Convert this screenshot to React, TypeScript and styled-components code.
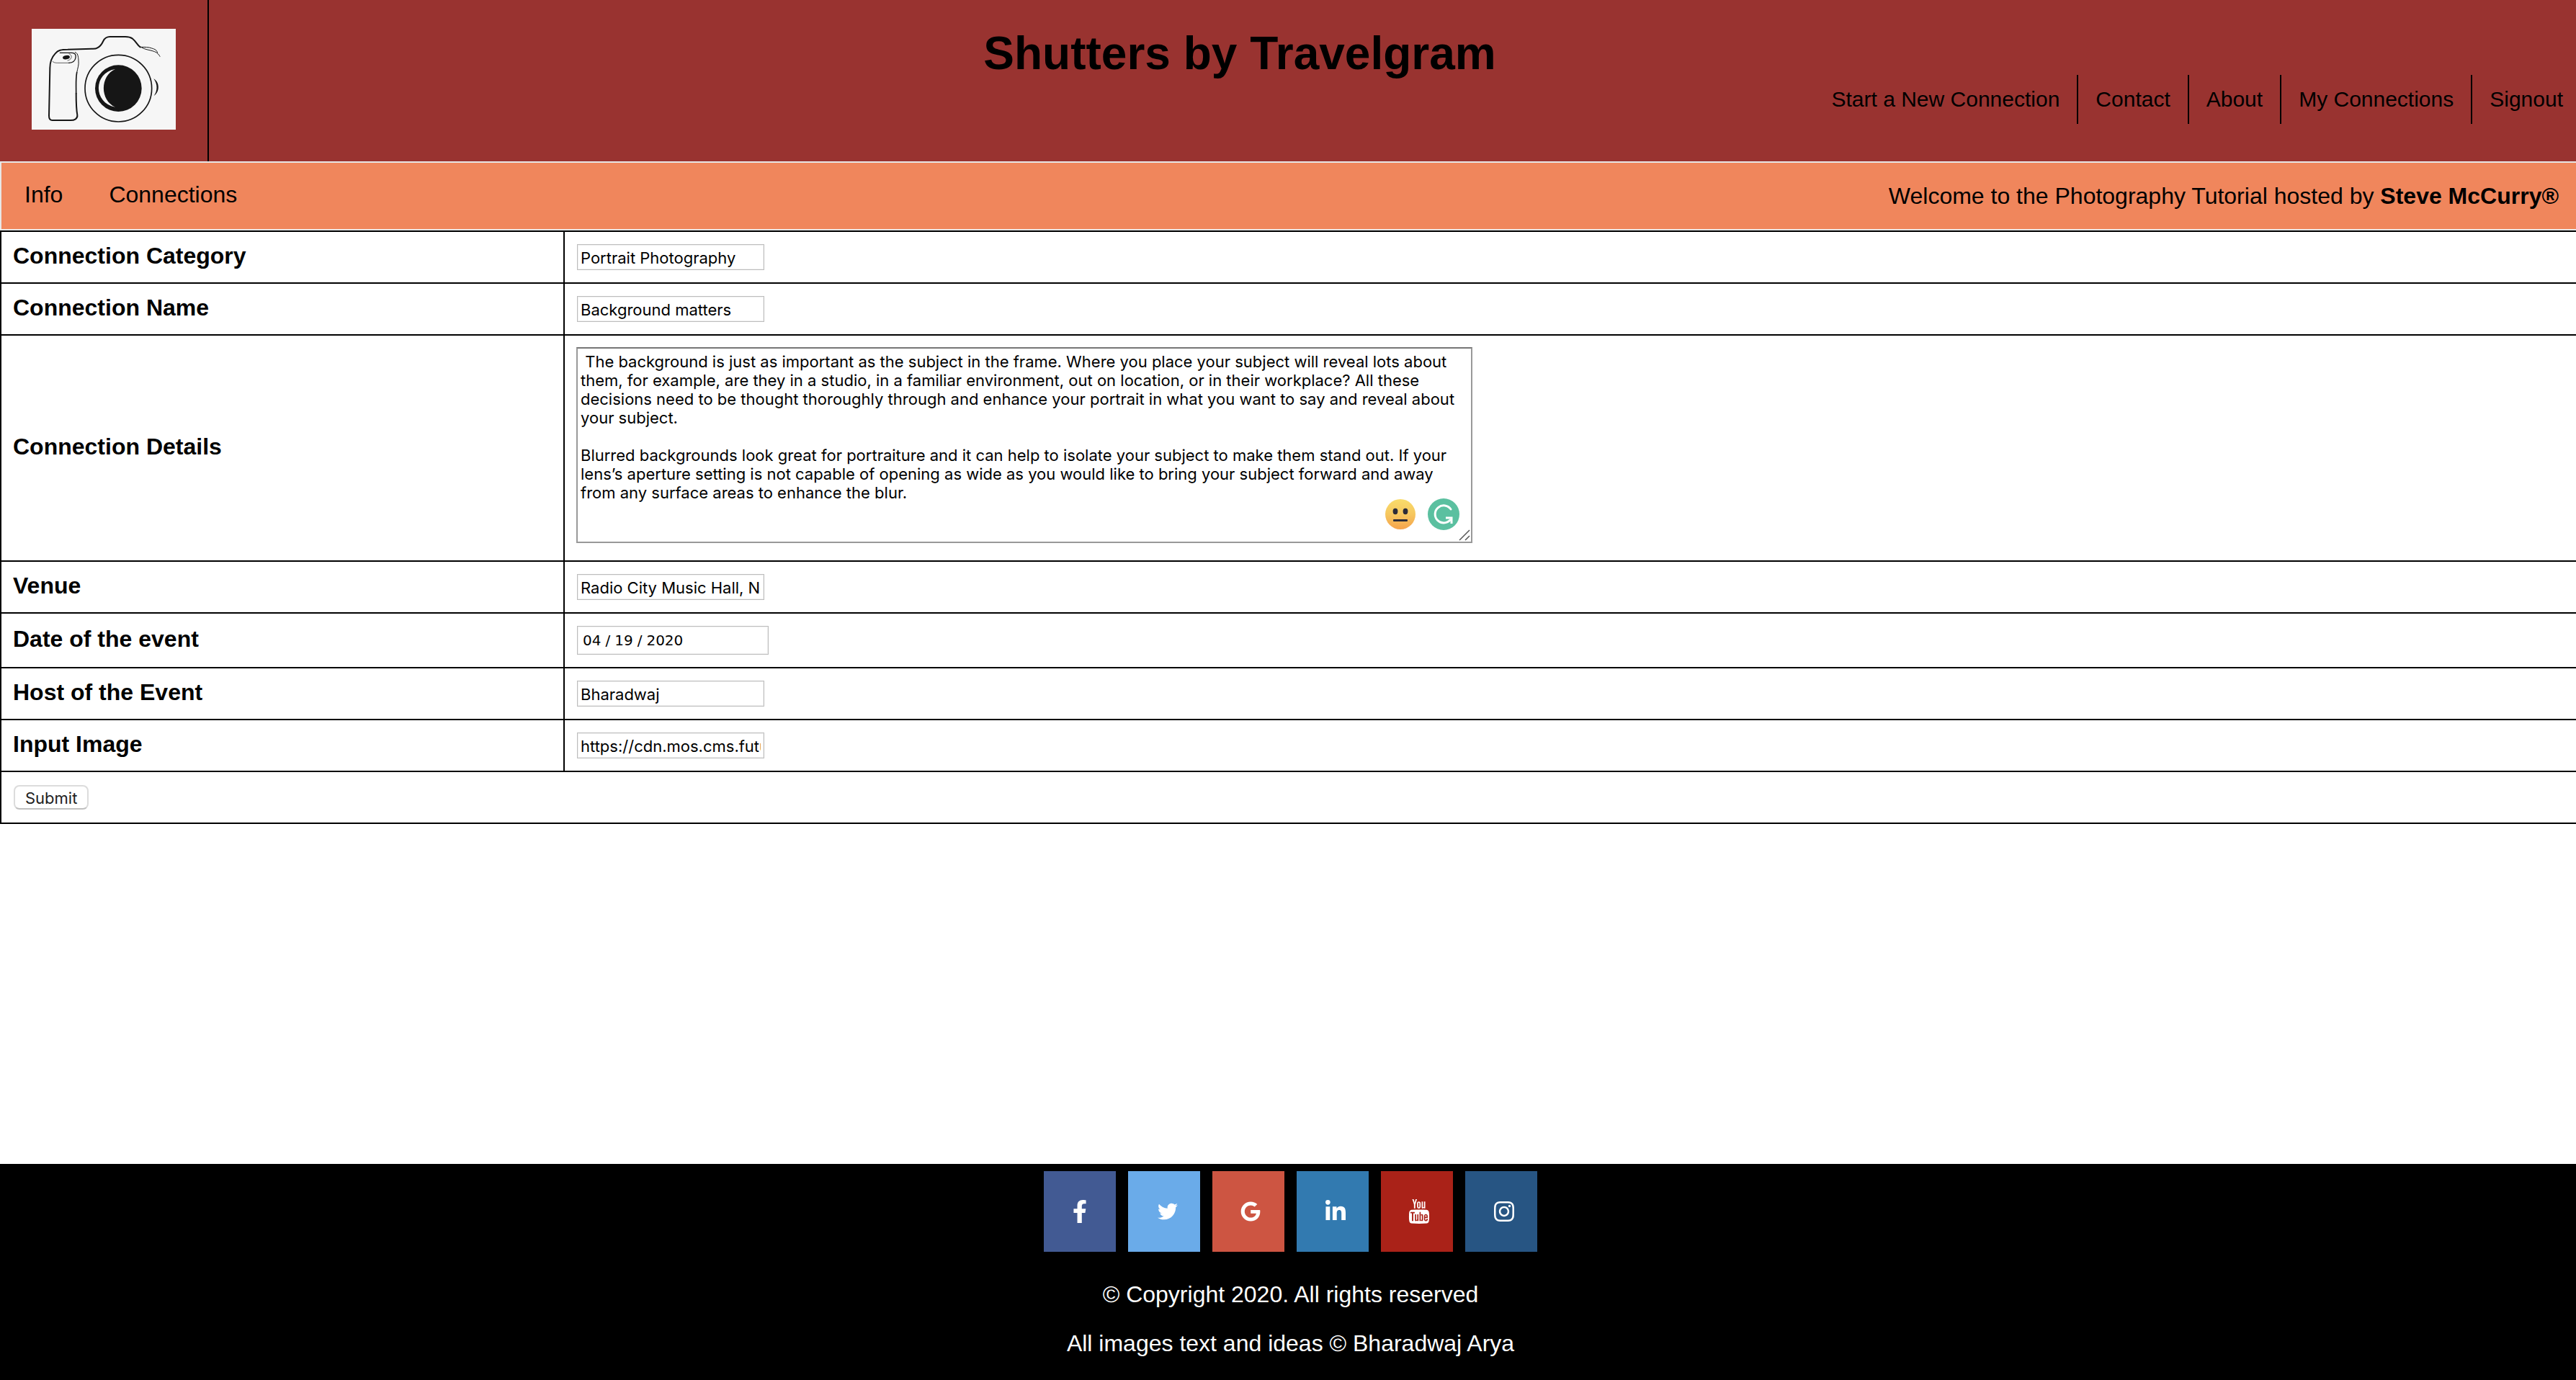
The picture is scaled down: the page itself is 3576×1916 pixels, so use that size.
import React from "react";
import styled, { createGlobalStyle } from "styled-components";
import { FaFacebookF, FaTwitter, FaGoogle, FaLinkedinIn, FaInstagram } from "react-icons/fa";
import { TfiYoutube } from "react-icons/tfi";

const GlobalStyle = createGlobalStyle`
  * { box-sizing: border-box; }
  body {
    margin: 0;
    background: #fff;
    color: #000;
    font: 32px/36px "Liberation Sans", Arial, sans-serif;
  }
  a { color: inherit; text-decoration: none; }
`;

const Page = styled.div`
  display: flex;
  flex-direction: column;
  min-height: 100vh;
`;

const Header = styled.header`
  display: flex;
  height: 224px;
  background: #993330;
`;

const LogoCell = styled.a`
  display: flex;
  padding: 40px 44px;
  border-right: 2px solid #000;
`;

const HeaderMain = styled.div`
  flex: 1;
  padding-top: 44px;
`;

const Title = styled.h1`
  margin: 0;
  padding-right: 424px;
  font-size: 64px;
  line-height: 60px;
  text-align: center;
`;

const MainNav = styled.nav`
  display: flex;
  justify-content: flex-end;
  margin-right: -6px;
`;

const MainNavLink = styled.a`
  padding: 16px 24px;
  font-size: 30px;
  border-right: 2px solid #000;
  &:last-child { border-right: 0; }
`;

const SubNav = styled.nav`
  display: flex;
  align-items: center;
  gap: 64px;
  height: 96px;
  padding: 0 24px 0 32px;
  background: #f0865c;
  border: 2px solid #e7e7e7;
  border-right: 0;
`;

const SubNavLink = styled.a`
  padding-bottom: 4px;
`;

const Welcome = styled.p`
  margin: 0 0 0 auto;
`;

const DetailsTable = styled.table`
  width: 100%;
  border-collapse: collapse;
  border: 2px solid #000;
  border-right: 0;
`;

const LabelCell = styled.th`
  width: 782px;
  padding: 14px 16px 18px;
  text-align: left;
  border: 2px solid #000;
`;

const FieldCell = styled.td`
  padding: 16px;
  border: 2px solid #000;
  border-right: 0;
`;

const TextField = styled.input`
  display: block;
  width: 260px;
  height: 36px;
  margin: 1px;
  padding: 2px 4px 0;
  font: 22px/26px Inter, sans-serif;
  color: #000;
  background: #fff;
  border: 1px solid #bdbdbd;
  border-radius: 0;
  box-shadow: inset 0 0 0 1px #efefef;
`;

const DateField = styled(TextField)`
  width: 266px;
  height: 40px;
  padding: 0 6px;
  font: 20px/26px "DejaVu Sans", sans-serif;
  &::-webkit-datetime-edit-text { padding: 0 5px; }
  &::-webkit-calendar-picker-indicator { display: none; }
`;

const DetailsBox = styled.div`
  position: relative;
  width: 1244px;
  padding-bottom: 8px;
`;

const DetailsField = styled.textarea`
  display: block;
  width: 100%;
  height: 272px;
  padding: 5px 4px;
  overflow: hidden;
  font: 22px/26px Inter, sans-serif;
  color: #000;
  background: #fff;
  border: 2px solid #999;
  border-top-color: #767676;
  border-radius: 0;
  resize: none;
`;

const Assistants = styled.div`
  position: absolute;
  right: 18px;
  bottom: 26px;
  display: flex;
  align-items: center;
  gap: 17px;
`;

const ResizeGrip = styled.svg`
  position: absolute;
  right: 2px;
  bottom: 10px;
  pointer-events: none;
`;

const SubmitButton = styled.button`
  display: block;
  height: 34px;
  margin: 2px 1px;
  padding: 2px 14px 0;
  font: 22px/26px Inter, sans-serif;
  color: #222;
  background: #fff;
  border: 2px solid #dcdcdc;
  border-bottom-color: #c0c0c0;
  border-radius: 8px;
`;

const Footer = styled.footer`
  margin-top: auto;
  padding: 10px 0 33px 7px;
  text-align: center;
  color: #fff;
  background: #000;
`;

const SocialList = styled.div`
  display: flex;
  justify-content: center;
  gap: 17px;
  margin-bottom: 41px;
`;

const SocialLink = styled.a<{ $color: string; $indent: number }>`
  display: flex;
  align-items: center;
  width: 100px;
  height: 112px;
  padding-left: ${(p) => p.$indent}px;
  background: ${(p) => p.$color};
`;

const FooterLine = styled.p`
  margin: 0;
  & + & { margin-top: 32px; }
`;

function CameraLogo() {
  return (
    <svg width="200" height="140" viewBox="0 0 600 420" fill="none" stroke="#161616" strokeLinecap="round" strokeLinejoin="round" role="img" aria-label="Camera">
      <rect width="600" height="420" fill="#f6f6f6" stroke="none" />
      <path strokeWidth="6" d="M452 76c-12-8-18-24-32-35-10-7-18-8-30-8h-64c-15 0-22 5-28 18-5 11-14 23-24 28-8 5-14 4-24 4L150 86c-28 0-40 3-52 17-15 16-22 34-22 60l-4 200c0 12 4 18 14 18h76c16 0 30-6 28-22-5-28-5-54-5-90" />
      <path strokeWidth="5" d="M185 270c0-44-2-60 3-88" />
      <path strokeWidth="3" d="M188 182c4-20 9-32 7-50-1-20-4-32-14-34" />
      <path strokeWidth="4" d="M118 100h50c12 0 17 8 15 20-2 14-12 21-28 22" />
      <path strokeWidth="2" d="M155 142h-48c-10 0-16-2-20-6M156 104c8 4 12 10 8 18-3 6-8 9-14 10" />
      <ellipse cx="144" cy="119" rx="15" ry="8" fill="#161616" stroke="none" transform="rotate(-10 144 119)" />
      <path strokeWidth="3" d="M452 76c20 0 36 0 48 5 14 4 22 8 24 20M458 78c18 10 34 10 48 15 16 5 22 12 28 22" />
      <circle cx="361" cy="248" r="139" strokeWidth="5" />
      <circle cx="361" cy="248" r="97" fill="#161616" stroke="none" />
      <path fill="#f6f6f6" stroke="none" d="M348 168c-92 14-92 142 0 158-64-28-64-130 0-158Z" />
      <path fill="#161616" stroke="none" d="M508 208c26 14 26 56 1 71 15-20 16-48-1-71Z" />
    </svg>
  );
}

function NeutralFace() {
  return (
    <svg width="42" height="42" viewBox="0 0 42 42" role="img" aria-label="Tone: neutral">
      <defs>
        <linearGradient id="face" x1="0" y1="0" x2="0" y2="1">
          <stop offset="0" stopColor="#f9dc6b" />
          <stop offset="0.5" stopColor="#f6c75f" />
          <stop offset="1" stopColor="#f5a34c" />
        </linearGradient>
      </defs>
      <circle cx="21" cy="21" r="21" fill="url(#face)" />
      <ellipse cx="14" cy="17" rx="3.4" ry="4.2" fill="#2b2b38" />
      <ellipse cx="28" cy="17" rx="3.4" ry="4.2" fill="#2b2b38" />
      <rect x="11" y="28" width="20" height="3" rx="1" fill="#2b2b38" />
    </svg>
  );
}

function GrammarBadge() {
  return (
    <svg width="44" height="44" viewBox="0 0 44 44" fill="none" role="img" aria-label="Grammar check">
      <circle cx="22" cy="22" r="22" fill="#5bc0a0" />
      <path d="M32 15A12 12 0 1 0 31 30" stroke="#fff" strokeWidth="3" strokeLinecap="round" />
      <path d="M25 27h8v8" stroke="#fff" strokeWidth="3" />
    </svg>
  );
}

const navItems = ["Start a New Connection", "Contact", "About", "My Connections", "Signout"];

const details = ` The background is just as important as the subject in the frame. Where you place your subject will reveal lots about them, for example, are they in a studio, in a familiar environment, out on location, or in their workplace? All these decisions need to be thought thoroughly through and enhance your portrait in what you want to say and reveal about your subject.

Blurred backgrounds look great for portraiture and it can help to isolate your subject to make them stand out. If your lens’s aperture setting is not capable of opening as wide as you would like to bring your subject forward and away from any surface areas to enhance the blur.`;

const socials = [
  { name: "Facebook", color: "#425a93", Icon: FaFacebookF, size: 32, indent: 34 },
  { name: "Twitter", color: "#6aabe9", Icon: FaTwitter, size: 28, indent: 41 },
  { name: "Google", color: "#cd5542", Icon: FaGoogle, size: 28, indent: 39 },
  { name: "LinkedIn", color: "#327ab0", Icon: FaLinkedinIn, size: 32, indent: 38 },
  { name: "YouTube", color: "#aa2218", Icon: TfiYoutube, size: 34, indent: 36 },
  { name: "Instagram", color: "#275583", Icon: FaInstagram, size: 32, indent: 38 },
];

function FieldRow({ id, label, children }: { id: string; label: string; children: React.ReactNode }) {
  return (
    <tr>
      <LabelCell scope="row">
        <label htmlFor={id}>{label}</label>
      </LabelCell>
      <FieldCell>{children}</FieldCell>
    </tr>
  );
}

export default function App() {
  return (
    <Page>
      <GlobalStyle />
      <Header>
        <LogoCell href="#home"><CameraLogo /></LogoCell>
        <HeaderMain>
          <Title>Shutters by Travelgram</Title>
          <MainNav>
            {navItems.map((item) => (
              <MainNavLink key={item} href="#">{item}</MainNavLink>
            ))}
          </MainNav>
        </HeaderMain>
      </Header>
      <SubNav>
        <SubNavLink href="#info">Info</SubNavLink>
        <SubNavLink href="#connections">Connections</SubNavLink>
        <Welcome>Welcome to the Photography Tutorial hosted by <b>Steve McCurry®</b></Welcome>
      </SubNav>
      <form>
        <DetailsTable>
          <tbody>
            <FieldRow id="category" label="Connection Category">
              <TextField id="category" defaultValue="Portrait Photography" />
            </FieldRow>
            <FieldRow id="name" label="Connection Name">
              <TextField id="name" defaultValue="Background matters" />
            </FieldRow>
            <FieldRow id="details" label="Connection Details">
              <DetailsBox>
                <DetailsField id="details" spellCheck={false} defaultValue={details} />
                <Assistants>
                  <NeutralFace />
                  <GrammarBadge />
                </Assistants>
                <ResizeGrip width="18" height="18" viewBox="0 0 18 18" stroke="#555" strokeWidth="1.5" aria-hidden="true">
                  <path d="M2 16L16 2M10 16l6-6" />
                </ResizeGrip>
              </DetailsBox>
            </FieldRow>
            <FieldRow id="venue" label="Venue">
              <TextField id="venue" defaultValue="Radio City Music Hall, New York" />
            </FieldRow>
            <FieldRow id="date" label="Date of the event">
              <DateField id="date" type="date" defaultValue="2020-04-19" />
            </FieldRow>
            <FieldRow id="host" label="Host of the Event">
              <TextField id="host" defaultValue="Bharadwaj" />
            </FieldRow>
            <FieldRow id="image" label="Input Image">
              <TextField id="image" defaultValue="https://cdn.mos.cms.futurecdn.net" />
            </FieldRow>
            <tr>
              <FieldCell colSpan={2}><SubmitButton type="button">Submit</SubmitButton></FieldCell>
            </tr>
          </tbody>
        </DetailsTable>
      </form>
      <Footer>
        <SocialList>
          {socials.map(({ name, color, Icon, size, indent }) => (
            <SocialLink key={name} href="#" $color={color} $indent={indent} aria-label={name}>
              <Icon size={size} />
            </SocialLink>
          ))}
        </SocialList>
        <FooterLine>© Copyright 2020. All rights reserved</FooterLine>
        <FooterLine>All images text and ideas © Bharadwaj Arya</FooterLine>
      </Footer>
    </Page>
  );
}
